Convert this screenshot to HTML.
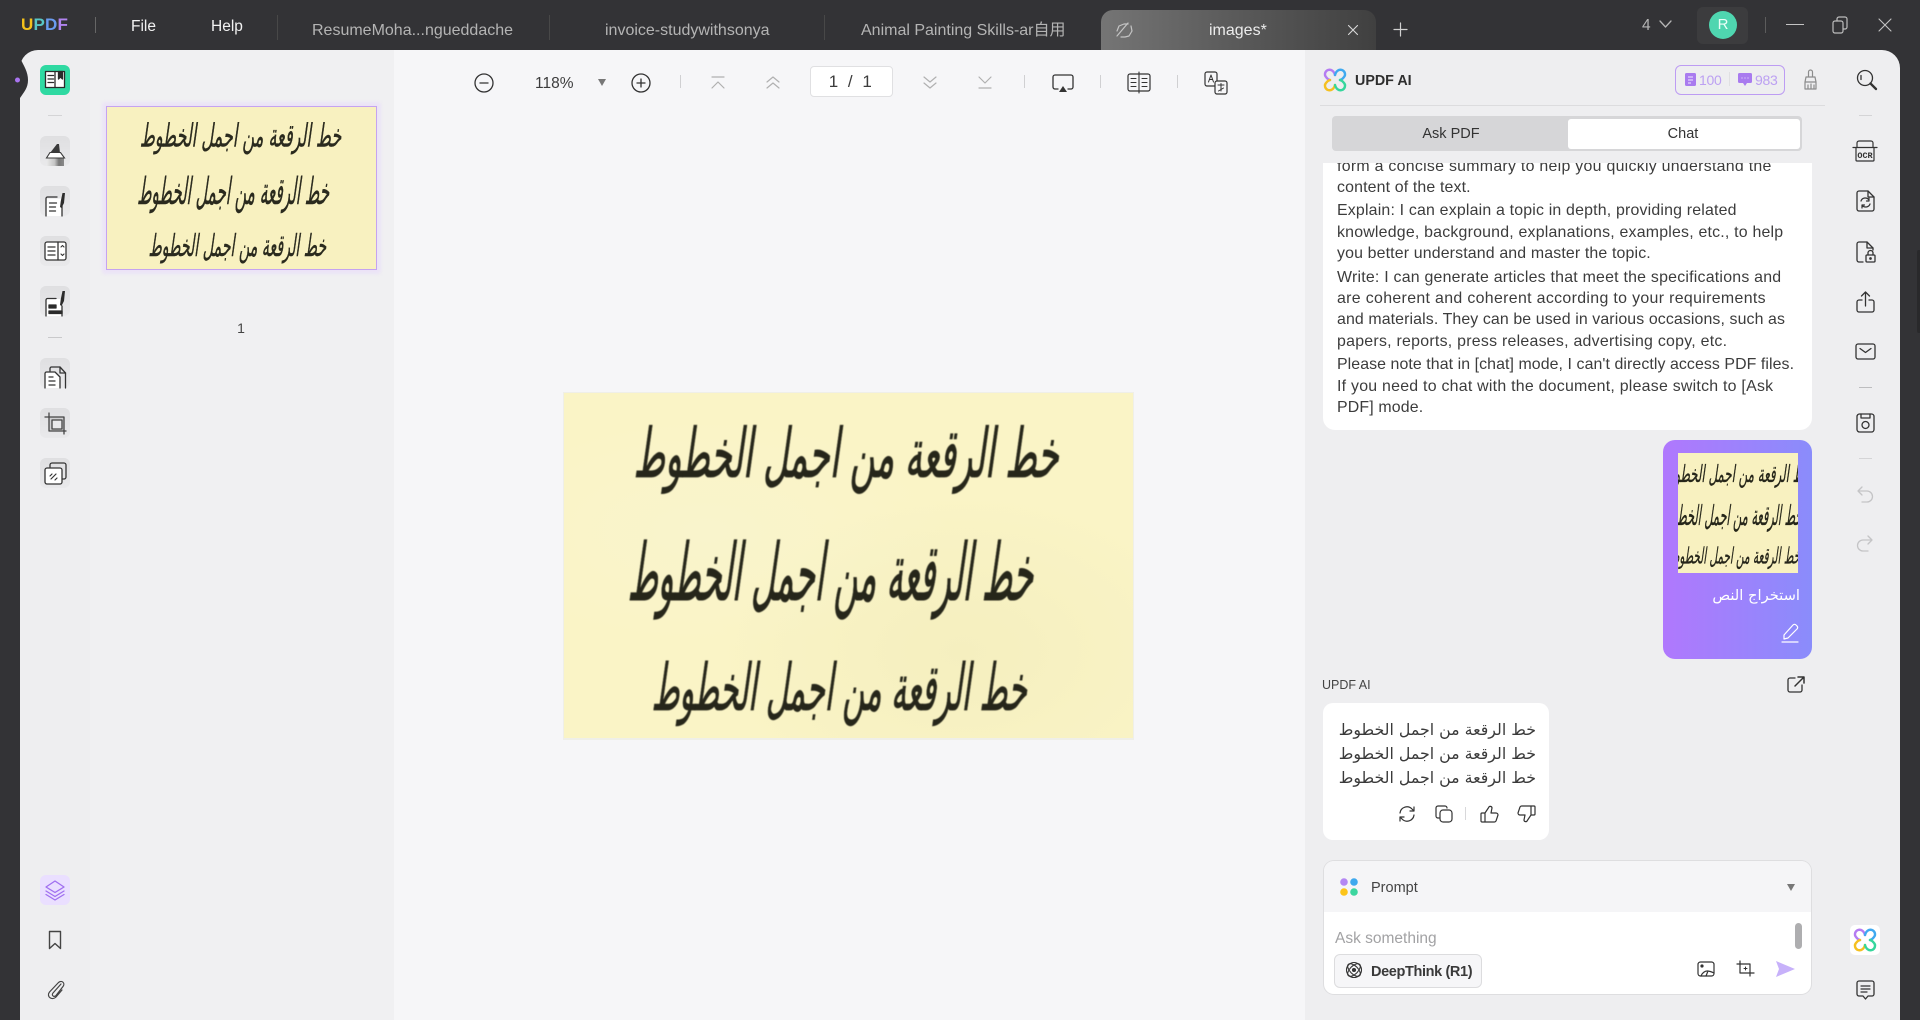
<!DOCTYPE html>
<html><head><meta charset="utf-8"><style>
html,body{margin:0;padding:0}
body{width:1920px;height:1020px;overflow:hidden;background:#333336;position:relative;font-family:"Liberation Sans","DejaVu Sans",sans-serif;color:#333}
div,span,svg{position:absolute}
.t{white-space:nowrap;line-height:20px;height:20px}
.i{fill:none;stroke:#333;stroke-width:1.5;stroke-linecap:round;stroke-linejoin:round;overflow:visible}
.tab{color:#b4b4b4;font-size:16px;top:21px}
.btn{left:40px;width:30px;height:30px;border-radius:6px;background:linear-gradient(#dfdfe1,#e9e9eb)}
.sep{background:#d4d4d6}
.m{left:1337px;font-size:15.9px;color:#3c3c3c;white-space:nowrap;line-height:20px}
.ar{font-family:"DejaVu Sans",sans-serif;direction:rtl;white-space:nowrap}
</style></head><body>

<!-- top bar -->
<div class="t" style="left:21px;top:15px;font-size:17px;font-weight:bold;letter-spacing:.2px"><span style="position:static;color:#f4c21b">U</span><span style="position:static;color:#58c6c6">P</span><span style="position:static;color:#6a9cf0">D</span><span style="position:static;color:#b184ef">F</span></div>
<div style="left:95px;top:17px;width:1px;height:16px;background:#666"></div>
<div class="t" style="left:131px;top:17px;font-size:15.5px;color:#f2f2f2">File</div>
<div class="t" style="left:211px;top:17px;font-size:15.5px;color:#f2f2f2">Help</div>
<div style="left:277px;top:15px;width:1px;height:25px;background:#484848"></div>
<div style="left:549px;top:15px;width:1px;height:25px;background:#484848"></div>
<div style="left:824px;top:15px;width:1px;height:25px;background:#484848"></div>
<div class="t tab" style="left:312px">ResumeMoha...ngueddache</div>
<div class="t tab" style="left:605px">invoice-studywithsonya</div>
<div class="t tab" style="left:861px;font-family:'Liberation Sans','Noto Sans CJK SC',sans-serif">Animal Painting Skills-ar自用</div>
<div style="left:1101px;top:10px;width:275px;height:42px;border-radius:12px 12px 0 0;background:linear-gradient(90deg,#757575 0,#5c5c5c 45%,#404040 100%)"></div>
<div class="t" style="left:1209px;top:21px;font-size:16px;color:#ececec">images*</div>
<svg class="i" style="left:1114px;top:20px;stroke:#c4c4c4;stroke-width:1.2" width="20" height="20" viewBox="0 0 20 20"><path d="M3 16 14 3M3 11l2-5 5-2h4M17 6l1 5-3 5-4 1H7"/></svg>
<svg class="i" style="left:1348px;top:25px;stroke:#d8d8d8;stroke-width:1.1" width="10" height="10"><path d="M0.500 0.500l9 9M9.500 0.500l-9 9"/></svg>
<svg class="i" style="left:1393px;top:22px;stroke:#d0d0d0;stroke-width:1.200" width="15" height="15"><path d="M7.500 1v13M1 7.500h13"/></svg>
<div class="t" style="left:1642px;top:16px;font-size:15.5px;color:#b5b5b5">4</div>
<svg class="i" style="left:1659px;top:20px;stroke:#b5b5b5;stroke-width:1.300" width="13" height="9"><path d="M1 1l5.500 6L12 1"/></svg>
<div style="left:1697px;top:7px;width:51px;height:37px;border-radius:6px;background:#3c3c3e"></div>
<div style="left:1709px;top:11px;width:28px;height:28px;border-radius:50%;background:#4fd6b0"></div>
<div class="t" style="left:1709px;top:15px;width:28px;text-align:center;font-size:15px;color:#eafff8">R</div>
<div style="left:1765px;top:17px;width:1px;height:16px;background:#5c5c5c"></div>
<div style="left:1786px;top:24px;width:18px;height:1px;background:#c4c4c4"></div>
<svg class="i" style="left:1832px;top:16px;stroke:#bdbdbd;stroke-width:1.200" width="17" height="18"><rect x="1" y="5" width="10" height="12" rx="2"/><path d="M5 5V3a2 2 0 0 1 2-2h6a2 2 0 0 1 2 2v8a2 2 0 0 1-2 2h-2"/></svg>
<svg class="i" style="left:1878px;top:18px;stroke:#c4c4c4;stroke-width:1.100" width="14" height="14"><path d="M1 1l12 12M13 1 1 13"/></svg>

<!-- main -->
<div style="left:20px;top:50px;width:1880px;height:970px;border-radius:18px 18px 0 0;background:#eeeef0;overflow:hidden">
  <div style="left:70px;top:0;width:304px;height:970px;background:#f0f0f2"></div>
  <div style="left:374px;top:0;width:911px;height:970px;background:#f6f6f8"></div>
</div>
<svg style="left:0;top:50px" width="40" height="60"><path d="M20 8C24 16 28 22 28 30 28 38 24 42 20 48Z" fill="#333336"/><circle cx="17.500" cy="30" r="2.500" fill="#a974f0"/></svg>
<div style="left:1917px;top:250px;width:3px;height:83px;background:#29292b;border-radius:2px 0 0 2px"></div>

<!-- left rail -->
<div class="btn" style="top:65px;background:#2fd9a2"></div>
<svg class="i" style="left:44px;top:70px;stroke:#2b2b2b;stroke-width:1.300" width="22" height="20"><path d="M1.500 1.500h19v16h-19z" fill="#fff"/><path d="M4 5.500h5.500M4 9h5.500M4 12.500h5.500M11 1.500v16"/><path d="M14.500 1.500h4v7.500l-2-2-2 2z" fill="#2b2b2b"/></svg>
<div class="sep" style="left:48px;top:115px;width:14px;height:1px"></div>
<div class="btn" style="top:136px"></div>
<svg style="left:40px;top:136px" width="30" height="30"><defs><linearGradient id="hg" x1="0" x2="1" y1="0" y2="0"><stop offset="0" stop-color="#e8e8e8"/><stop offset=".45" stop-color="#c4c4c4"/><stop offset=".7" stop-color="#777"/><stop offset="1" stop-color="#8a8a8a"/></linearGradient></defs><path d="M10 17 17 8 19 8 20 17Z" fill="#3a3a3a"/><path d="M10 16.500H20.500L24.500 22H6.500Z" fill="#fff" stroke="#3a3a3a" stroke-width="1.100"/><path d="M7 22.500H24V30H7Z" fill="url(#hg)"/></svg>
<div class="btn" style="top:186px"></div>
<svg class="i" style="left:45px;top:192px;stroke-width:1.300" width="22" height="24"><path d="M1 24V6.500h16V24z" fill="#fff" stroke="none"/><path d="M1 24V6.500a1.500 1.500 0 0 1 1.500-1.500H12M17 14v10"/><path d="M4.500 11h7M4.500 15h6M4.500 19h6"/><path d="M17.500 1h2.500l-1 10-2.500 5-1.500-1 .8-6z" fill="#2b2b2b" stroke="none"/></svg>
<div class="btn" style="top:236px"></div>
<svg class="i" style="left:44px;top:241px;stroke-width:1.300" width="23" height="20"><rect x="1" y="1" width="21" height="18" rx="2" fill="#fff"/><path d="M14 1v18M4 6h7M4 10h7M4 14h7"/><path d="M17 6l1.500-1.500L20 6M17 13l1.500 1.500L20 13" stroke-width="1.100"/></svg>
<div class="btn" style="top:286px"></div>
<svg class="i" style="left:45px;top:290px;stroke-width:1.300" width="22" height="26"><path d="M1 26V9h16v17z" fill="#fff" stroke="none"/><path d="M1 26V10a1.500 1.500 0 0 1 1.500-1.500H11M17 16v10"/><path d="M4 15h7v3H4zM4 21h13v2.500H4z" fill="#2b2b2b" stroke="#2b2b2b"/><path d="M17.500 1h2.500l-1 10-2.500 5-1.500-1 .8-6z" fill="#2b2b2b" stroke="none"/></svg>
<div class="sep" style="left:48px;top:337px;width:14px;height:1px;background:#c9c9cb"></div>
<div class="btn" style="top:358px"></div>
<svg class="i" style="left:44px;top:366px;stroke-width:1.300" width="23" height="22"><path d="M6 5V2.500A1.500 1.500 0 0 1 7.500 1H16l5.500 6v15"/><path d="M1 22V7.500A1.500 1.500 0 0 1 2.500 6H11l5 5v11z" fill="#fff" stroke="none"/><path d="M1 22V7.500A1.500 1.500 0 0 1 2.500 6H11l5 5v11M5 11h4M5 15h6M5 19h6"/><path d="M16 1v6h5.500"/></svg>
<div class="btn" style="top:408px"></div>
<svg class="i" style="left:44px;top:412px;stroke:#444;stroke-width:1.300" width="23" height="23"><rect x="5" y="5" width="15" height="14" fill="#cfcfd1" stroke="none"/><rect x="8" y="8" width="10" height="9" fill="#e9e9eb"/><path d="M1 5h19v14M5 1v18h17M20 19v3"/></svg>
<div class="btn" style="top:458px"></div>
<svg class="i" style="left:44px;top:462px;stroke-width:1.300" width="23" height="23"><path d="M6 5V3a2 2 0 0 1 2-2h12a2 2 0 0 1 2 2v12a2 2 0 0 1-2 2h-2"/><rect x="1" y="6" width="17" height="16" rx="2" fill="#fff"/><path d="M6 14l2-2M7 17l5-5M11 18l2-2" stroke-width="1.200"/></svg>

<div style="left:40px;top:875px;width:30px;height:30px;border-radius:6px;background:#eadfff"></div>
<svg class="i" style="left:45px;top:879px;stroke:#a06ff0;stroke-width:1.300" width="20" height="22"><path d="M10 2 19 8 10 13.500 1 8Z"/><path d="M1 12l9 5.500 9-5.500M1 15.500l9 5.500 9-5.500"/></svg>
<svg class="i" style="left:48px;top:930px;stroke:#444;stroke-width:1.400" width="14" height="20"><path d="M1.500 1.500h11v17l-5.500-5-5.500 5z"/></svg>
<svg class="i" style="left:46px;top:977px;stroke:#444;stroke-width:1.200" width="20" height="22"><path d="M15 7 7 16c-2 2.500 1 4.500 3 2.500l7-9c2.500-3-1-7-4.500-4L3.500 15c-3.500 4.500 2.500 9 6.500 5l6-7"/></svg>

<!-- thumbnail panel -->
<div style="left:102px;top:102px;width:279px;height:172px;background:#ebe3f7;border-radius:3px;filter:blur(1.5px)"></div>
<div style="left:106px;top:106px;width:269px;height:162px;border:1px solid #c5a3f0;background:#f8f1c0;overflow:hidden">
<svg width="269" height="162" viewBox="0 0 568 345" preserveAspectRatio="none" style="left:0;top:0"><g font-family="DejaVu Sans" direction="rtl" text-anchor="middle" fill="#2a2a1e" stroke="#2a2a1e" stroke-width=".5"><text font-size="40" textLength="425" lengthAdjust="spacingAndGlyphs" transform="translate(282,84) skewX(-8) scale(1,1.7)">خط الرقعة من اجمل الخطوط</text><text font-size="44" textLength="405" lengthAdjust="spacingAndGlyphs" transform="translate(266,207) skewX(-8) scale(1,1.800)">خط الرقعة من اجمل الخطوط</text><text font-size="38" textLength="375" lengthAdjust="spacingAndGlyphs" transform="translate(275,317) skewX(-8) scale(1,1.700)">خط الرقعة من اجمل الخطوط</text></g></svg></div>
<div class="t" style="left:237px;top:318px;width:8px;text-align:center;font-size:14px;color:#444">1</div>

<!-- toolbar -->
<svg class="i" style="left:474px;top:73px;stroke-width:1.300" width="20" height="20"><circle cx="10" cy="10" r="9"/><path d="M6 10h8"/></svg>
<div class="t" style="left:535px;top:74px;font-size:15.500px;color:#3c3c3c">118%</div>
<svg style="left:598px;top:79px" width="8" height="7"><path d="M0 0h8L4 7z" fill="#777"/></svg>
<svg class="i" style="left:631px;top:73px;stroke-width:1.300" width="20" height="20"><circle cx="10" cy="10" r="9"/><path d="M6 10h8M10 6v8"/></svg>
<div style="left:680px;top:75px;width:1px;height:13px;background:#d0d0d2"></div>
<svg class="i" style="left:711px;top:76px;stroke:#b0b0b0;stroke-width:1.200" width="14" height="13"><path d="M1 1h12M1 12l6-6 6 6"/></svg>
<svg class="i" style="left:766px;top:76px;stroke:#b0b0b0;stroke-width:1.200" width="14" height="13"><path d="M1 6l6-5 6 5M1 12l6-5 6 5"/></svg>
<div style="left:810px;top:66px;width:81px;height:29px;border:1px solid #e0e0e2;border-radius:4px;background:#fff"></div>
<div class="t" style="left:810px;top:72px;width:83px;text-align:center;font-size:17px;color:#3c3c3c;letter-spacing:2.500px">1 / 1</div>
<svg class="i" style="left:923px;top:76px;stroke:#b0b0b0;stroke-width:1.200" width="14" height="13"><path d="M1 1l6 5 6-5M1 7l6 5 6-5"/></svg>
<svg class="i" style="left:978px;top:76px;stroke:#b0b0b0;stroke-width:1.200" width="14" height="13"><path d="M1 1l6 6 6-6M1 12h12"/></svg>
<div style="left:1024px;top:75px;width:1px;height:13px;background:#d0d0d2"></div>
<svg class="i" style="left:1052px;top:74px;stroke-width:1.300" width="22" height="20"><path d="M6 15H3a2 2 0 0 1-2-2V3a2 2 0 0 1 2-2h16a2 2 0 0 1 2 2v10a2 2 0 0 1-2 2h-3"/><path d="M11 12l4 6H7z" fill="#333" stroke="none"/></svg>
<div style="left:1100px;top:75px;width:1px;height:13px;background:#d0d0d2"></div>
<svg class="i" style="left:1127px;top:72px;stroke-width:1.200" width="24" height="21"><rect x="1" y="2" width="22" height="17" rx="2"/><path d="M12 0v21M4 6.500h5M4 10.500h5M4 14.500h5M15 6.500h5M15 10.500h5M15 14.500h5" stroke-width="1.100"/></svg>
<div style="left:1177px;top:75px;width:1px;height:13px;background:#d0d0d2"></div>
<svg class="i" style="left:1204px;top:71px;stroke-width:1.200" width="24" height="24"><rect x="1" y="1" width="12" height="14" rx="2"/><rect x="11" y="10" width="12" height="13" rx="2" fill="#f6f6f8"/><path d="M4.500 11l2.500-7 2.500 7M5.500 8.500h3M14 14h6M17 12.500V20M14.500 20l5-3" stroke-width="1"/></svg>

<!-- main image -->
<div style="left:563px;top:392px;width:571px;height:348px;background:#efefe8"></div>
<div style="left:564px;top:393px;width:569px;height:345px;background:radial-gradient(ellipse at 25% 40%,#f9f4cc 0,rgba(249,244,204,0) 40%),radial-gradient(ellipse at 70% 75%,#f5efbf 0,rgba(245,239,191,0) 45%),#faf4c6;overflow:hidden">
<svg width="568" height="345" viewBox="0 0 568 345" style="left:0;top:0;filter:blur(.5px)"><g font-family="DejaVu Sans" direction="rtl" text-anchor="middle" fill="#26261a" stroke="#26261a" stroke-width=".5"><text font-size="40" textLength="425" lengthAdjust="spacingAndGlyphs" transform="translate(282,84) skewX(-8) scale(1,1.7)">خط الرقعة من اجمل الخطوط</text><text font-size="44" textLength="405" lengthAdjust="spacingAndGlyphs" transform="translate(266,207) skewX(-8) scale(1,1.800)">خط الرقعة من اجمل الخطوط</text><text font-size="38" textLength="375" lengthAdjust="spacingAndGlyphs" transform="translate(275,317) skewX(-8) scale(1,1.700)">خط الرقعة من اجمل الخطوط</text></g></svg></div>

<!-- AI panel header -->
<svg class="i" style="left:1323px;top:68px;stroke-width:2.400" width="24" height="24" viewBox="0 0 24 24"><path d="M12 7C11 3 8 1 5 2 2 3 1 7 3 9c1 1.500 2 2.500 4 3" stroke="#b57cf2"/><path d="M12 7c1-4 4-6 7-5 3 1 4 5 2 7-1 1.500-2 2.500-4 3" stroke="#3fa9f0"/><path d="M7 12c-2 .5-3 1.500-4 3-2 2-1 6 2 7 3 1 6-1 7-5" stroke="#f5c020"/><path d="M17 12c2 .5 3 1.500 4 3 2 2 1 6-2 7-3 1-6-1-7-5" stroke="#35d69c"/></svg>
<div class="t" style="left:1355px;top:71px;font-size:14.300px;font-weight:bold;color:#2e2e2e">UPDF AI</div>
<div style="left:1675px;top:65px;width:108px;height:28px;border:1px solid #bd9cf3;border-radius:6px"></div>
<svg style="left:1685px;top:73px" width="11" height="13"><rect width="11" height="13" rx="1.500" fill="#a97bef"/><path d="M3 4h5M3 7h5M3 10h3" stroke="#f0e8ff" fill="none"/></svg>
<div class="t" style="left:1699px;top:70px;font-size:14px;letter-spacing:-.3px;color:#bca0f2">100</div>
<div style="left:1729px;top:72px;width:1px;height:14px;background:#e0e0e2"></div>
<svg style="left:1738px;top:73px" width="14" height="13"><path d="M1.500 0h11A1.500 1.500 0 0 1 14 1.500v7A1.500 1.500 0 0 1 12.500 10H9l-2 3-2-3H1.500A1.500 1.500 0 0 1 0 8.500v-7A1.500 1.500 0 0 1 1.500 0z" fill="#a97bef"/><path d="M3.500 5h1M6.500 5h1M9.500 5h1" stroke="#f0e8ff"/></svg>
<div class="t" style="left:1755px;top:70px;font-size:14px;letter-spacing:-.3px;color:#bca0f2">983</div>
<svg class="i" style="left:1803px;top:69px;stroke:#8c8c8c;stroke-width:1.200" width="15" height="21"><path d="M5.500 8V3a2 2 0 0 1 4 0v5M3 8h9l1 5H2zM2 13v7h11v-7M5 16v4M8 15v5M11 16v4"/></svg>
<svg class="i" style="left:1856px;top:69px;stroke-width:1.300" width="22" height="22"><circle cx="9" cy="9" r="7.500"/><path d="M5 6.500v4"/><path d="M14.500 14.500 20 20" stroke-width="2.300"/></svg>
<div style="left:1320px;top:105px;width:505px;height:1px;background:#dcdcde"></div>
<div style="left:1332px;top:116px;width:470px;height:35px;border-radius:4px;background:#d6d6d8"></div>
<div style="left:1568px;top:119px;width:232px;height:30px;border-radius:3px;background:#fff"></div>
<div class="t" style="left:1333px;top:124px;width:236px;text-align:center;font-size:14.500px;color:#333">Ask PDF</div>
<div class="t" style="left:1567px;top:124px;width:232px;text-align:center;font-size:14.500px;color:#333">Chat</div>

<!-- message -->
<div style="left:1323px;top:163px;width:489px;height:267px;background:#fff;border-radius:0 0 12px 12px;overflow:hidden"></div>
<div class="m" style="top:157px;letter-spacing:.28px;clip-path:inset(6px 0 0 0)">form a concise summary to help you quickly understand the</div>
<div class="m" style="top:178px;letter-spacing:.15px">content of the text.</div>
<div class="m" style="top:201px;letter-spacing:.19px">Explain: I can explain a topic in depth, providing related</div>
<div class="m" style="top:223px;letter-spacing:.21px">knowledge, background, explanations, examples, etc., to help</div>
<div class="m" style="top:244px;letter-spacing:.15px">you better understand and master the topic.</div>
<div class="m" style="top:268px;letter-spacing:.23px">Write: I can generate articles that meet the specifications and</div>
<div class="m" style="top:289px;letter-spacing:.34px">are coherent and coherent according to your requirements</div>
<div class="m" style="top:310px;letter-spacing:.11px">and materials. They can be used in various occasions, such as</div>
<div class="m" style="top:332px;letter-spacing:.26px">papers, reports, press releases, advertising copy, etc.</div>
<div class="m" style="top:355px;letter-spacing:.08px">Please note that in [chat] mode, I can't directly access PDF files.</div>
<div class="m" style="top:377px;letter-spacing:.25px">If you need to chat with the document, please switch to [Ask</div>
<div class="m" style="top:398px;letter-spacing:.15px">PDF] mode.</div>

<!-- purple bubble -->
<div style="left:1663px;top:440px;width:149px;height:219px;border-radius:12px;background:linear-gradient(90deg,#b078fd,#8a8cfb)"></div>
<div style="left:1678px;top:453px;width:120px;height:120px;background:#f8f1c0;overflow:hidden">
<svg width="120" height="120" viewBox="0 0 568 345" preserveAspectRatio="xMidYMid slice" style="left:0;top:0"><g font-family="DejaVu Sans" direction="rtl" text-anchor="middle" fill="#26261a" stroke="#26261a" stroke-width=".5"><text font-size="40" textLength="425" lengthAdjust="spacingAndGlyphs" transform="translate(282,84) skewX(-8) scale(1,1.7)">خط الرقعة من اجمل الخطوط</text><text font-size="44" textLength="405" lengthAdjust="spacingAndGlyphs" transform="translate(266,207) skewX(-8) scale(1,1.800)">خط الرقعة من اجمل الخطوط</text><text font-size="38" textLength="375" lengthAdjust="spacingAndGlyphs" transform="translate(275,317) skewX(-8) scale(1,1.700)">خط الرقعة من اجمل الخطوط</text></g></svg></div>
<div class="t ar" style="right:120px;top:586px;font-size:14.700px;color:#fff">استخراج النص</div>
<svg class="i" style="left:1781px;top:623px;stroke:#fff;stroke-width:1.200" width="18" height="20"><path d="M3 12 12 2a2 2 0 0 1 3 0l1 1a2 2 0 0 1 0 3L7 15l-4 1zM1 19h16"/></svg>

<!-- UPDF AI -->
<div class="t" style="left:1322px;top:675px;font-size:12.500px;color:#444">UPDF AI</div>
<svg class="i" style="left:1787px;top:676px;stroke-width:1.300" width="18" height="17"><path d="M8 2H3a2 2 0 0 0-2 2v10a2 2 0 0 0 2 2h10a2 2 0 0 0 2-2V9"/><path d="M8 10l9-9M11 1h6v6" stroke-width="1.500"/></svg>
<div style="left:1323px;top:703px;width:226px;height:137px;border-radius:10px;background:#fff"></div>
<div class="t ar" style="right:384px;top:718px;font-size:15.800px;color:#3a3a3a;line-height:24px">خط الرقعة من اجمل الخطوط</div>
<div class="t ar" style="right:384px;top:742px;font-size:15.800px;color:#3a3a3a;line-height:24px">خط الرقعة من اجمل الخطوط</div>
<div class="t ar" style="right:384px;top:766px;font-size:15.800px;color:#3a3a3a;line-height:24px">خط الرقعة من اجمل الخطوط</div>
<svg class="i" style="left:1398px;top:805px;stroke-width:1.200" width="18" height="18"><path d="M2 8a7 7 0 0 1 12-4l2 2M16 10a7 7 0 0 1-12 4l-2-2M16 2v4h-4M2 16v-4h4"/></svg>
<svg class="i" style="left:1435px;top:805px;stroke-width:1.200" width="18" height="18"><path d="M4 13H3a2 2 0 0 1-2-2V3a2 2 0 0 1 2-2h7a2 2 0 0 1 2 2"/><rect x="5" y="5" width="12" height="12" rx="3"/></svg>
<div style="left:1465px;top:807px;width:1px;height:13px;background:#d8d8da"></div>
<svg class="i" style="left:1480px;top:805px;stroke-width:1.200" width="19" height="18"><path d="M5 8v9H2a1 1 0 0 1-1-1V9a1 1 0 0 1 1-1zM5 8l4-6c0-1 3-1 3 1l-1 5h5a2 2 0 0 1 2 2l-2 6a2 2 0 0 1-2 1H5"/></svg>
<svg class="i" style="left:1517px;top:805px;stroke-width:1.200" width="19" height="18"><path d="M14 10V1h3a1 1 0 0 1 1 1v7a1 1 0 0 1-1 1zM14 10l-4 6c0 1-3 1-3-1l1-5H3a2 2 0 0 1-2-2l2-6a2 2 0 0 1 2-1h9"/></svg>

<!-- input -->
<div style="left:1324px;top:861px;width:487px;height:133px;border-radius:10px;background:#fff;box-shadow:0 0 0 1px #dedee0"></div>
<div style="left:1324px;top:861px;width:487px;height:51px;border-radius:10px 10px 0 0;background:#f5f5f7"></div>
<svg style="left:1340px;top:878px" width="18" height="18"><circle cx="4" cy="4" r="3.800" fill="#b487f3"/><circle cx="14" cy="4" r="3.800" fill="#3ea9ee"/><circle cx="4" cy="14" r="3.800" fill="#fcc419"/><circle cx="14" cy="14" r="3.800" fill="#3cd69f"/></svg>
<div class="t" style="left:1371px;top:878px;font-size:14.500px;color:#444">Prompt</div>
<svg style="left:1787px;top:884px" width="8" height="7"><path d="M0 0h8L4 7z" fill="#777"/></svg>
<div class="t" style="left:1335px;top:929px;font-size:15.500px;color:#a2a2a4">Ask something</div>
<div style="left:1795px;top:923px;width:7px;height:26px;border-radius:4px;background:#aeaeb0"></div>
<div style="left:1334px;top:954px;width:146px;height:32px;border:1px solid #dcdcde;border-radius:6px;background:#f6f6f8"></div>
<svg class="i" style="left:1345px;top:961px;stroke-width:1.100" width="18" height="18"><ellipse cx="9" cy="9" rx="8" ry="4" transform="rotate(45 9 9)"/><ellipse cx="9" cy="9" rx="8" ry="4" transform="rotate(-45 9 9)"/><circle cx="9" cy="9" r="7.500"/><circle cx="9" cy="9" r="1.500" fill="#333"/></svg>
<div class="t" style="left:1371px;top:962px;font-size:14.500px;color:#3a3a3a;font-weight:bold;letter-spacing:-.37px">DeepThink (R1)</div>
<svg class="i" style="left:1697px;top:961px;stroke-width:1.200" width="18" height="16"><rect x="1" y="1" width="16" height="14" rx="2.500"/><circle cx="5" cy="5" r="1" fill="#333"/><path d="M4 15c1-3 4-5 6-5s5 1 7 2M9 15l2-5"/></svg>
<svg class="i" style="left:1736px;top:960px;stroke-width:1.200" width="18" height="18"><path d="M1 4h13v12M4 1v12h14"/><path d="M8 8.500h3M9.500 7v3" stroke-width="1"/></svg>
<svg style="left:1776px;top:961px" width="19" height="16"><path d="M0 0 19 8 0 16 3 8Z" fill="#c7b1fa"/></svg>

<!-- right rail -->
<div class="sep" style="left:1859px;top:115px;width:13px;height:1px"></div>
<svg class="i" style="left:1853px;top:140px;stroke-width:1.200" width="24" height="22"><path d="M0 7.500h24M4 7V3a2 2 0 0 1 2-2h12a2 2 0 0 1 2 2v4M3 8v12a1 1 0 0 0 1 1h16a1 1 0 0 0 1-1V8"/><text x="12" y="18" font-family="Liberation Mono" font-size="8.500" font-weight="bold" fill="#333" stroke="none" text-anchor="middle">OCR</text></svg>
<svg class="i" style="left:1856px;top:190px;stroke-width:1.300" width="19" height="22"><path d="M3 1h9l6 6v12a2 2 0 0 1-2 2H3a2 2 0 0 1-2-2V3a2 2 0 0 1 2-2z"/><path d="M12 1v6h6"/><path d="M5 11a4.500 4.500 0 0 1 8-1M14 14a4.500 4.500 0 0 1-8 1M13 8v3h-2.500M6 18v-3h2.500" stroke-width="1.200"/></svg>
<svg class="i" style="left:1856px;top:241px;stroke-width:1.300" width="20" height="22"><path d="M7 21H3a2 2 0 0 1-2-2V3a2 2 0 0 1 2-2h8l6 6v2"/><path d="M11 1v6h6"/><rect x="10" y="14" width="9" height="7" rx="1"/><path d="M12 14v-2a2.500 2.500 0 0 1 5 0v2"/><circle cx="14.500" cy="17.500" r=".7" fill="#333"/></svg>
<svg class="i" style="left:1856px;top:291px;stroke-width:1.300" width="19" height="22"><path d="M6 9H3a2 2 0 0 0-2 2v8a2 2 0 0 0 2 2h13a2 2 0 0 0 2-2v-8a2 2 0 0 0-2-2h-3"/><path d="M9.500 15V1M5.500 5l4-4 4 4"/></svg>
<svg class="i" style="left:1855px;top:343px;stroke-width:1.300" width="21" height="17"><rect x="1" y="1" width="19" height="15" rx="2"/><path d="M5 5.500l5.500 4 5.500-4"/></svg>
<div class="sep" style="left:1859px;top:387px;width:13px;height:1px;background:#bdbdbf"></div>
<svg class="i" style="left:1856px;top:413px;stroke-width:1.300" width="19" height="20"><rect x="1" y="1" width="17" height="18" rx="2.500"/><path d="M5 1v4h9V1"/><circle cx="9.500" cy="12" r="3.500"/></svg>
<div class="sep" style="left:1859px;top:458px;width:13px;height:1px"></div>
<svg class="i" style="left:1857px;top:486px;stroke:#c4c4c6;stroke-width:1.300" width="16" height="17"><path d="M5 1 1 5l4 4M1 5h9a5 5 0 0 1 0 11H5"/></svg>
<svg class="i" style="left:1857px;top:535px;stroke:#c4c4c6;stroke-width:1.300" width="16" height="17"><path d="M11 1l4 4-4 4M15 5H6a5 5 0 0 0 0 11h5"/></svg>
<div style="left:1850px;top:925px;width:30px;height:30px;border-radius:5px;background:#fff"></div>
<svg class="i" style="left:1853px;top:928px;stroke-width:2.400" width="24" height="24" viewBox="0 0 24 24"><path d="M12 7C11 3 8 1 5 2 2 3 1 7 3 9c1 1.500 2 2.500 4 3" stroke="#b57cf2"/><path d="M12 7c1-4 4-6 7-5 3 1 4 5 2 7-1 1.500-2 2.500-4 3" stroke="#3fa9f0"/><path d="M7 12c-2 .5-3 1.500-4 3-2 2-1 6 2 7 3 1 6-1 7-5" stroke="#f5c020"/><path d="M17 12c2 .5 3 1.500 4 3 2 2 1 6-2 7-3 1-6-1-7-5" stroke="#35d69c"/></svg>
<svg class="i" style="left:1856px;top:980px;stroke-width:1.300" width="19" height="20"><path d="M3 1h13a2 2 0 0 1 2 2v11a2 2 0 0 1-2 2h-4l-2.500 3L7 16H3a2 2 0 0 1-2-2V3a2 2 0 0 1 2-2z"/><path d="M5 6h9M5 9h9M5 12h6" stroke-width="1.200"/></svg>
</body></html>
